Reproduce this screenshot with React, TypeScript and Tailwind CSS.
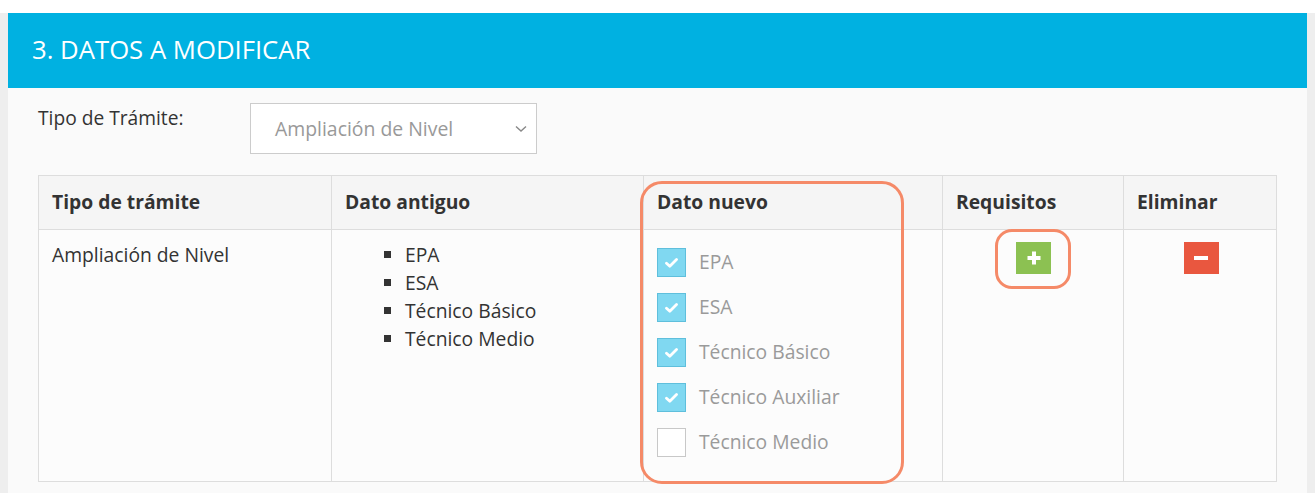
import React from 'react'

const OLD_VALUES = ['EPA', 'ESA', 'Técnico Básico', 'Técnico Medio']

const NEW_VALUES = [
  { label: 'EPA', checked: true },
  { label: 'ESA', checked: true },
  { label: 'Técnico Básico', checked: true },
  { label: 'Técnico Auxiliar', checked: true },
  { label: 'Técnico Medio', checked: false }
]

function CheckBox({ checked }: { checked: boolean }) {
  if (!checked) {
    return <span className="block h-[29px] w-[29px] shrink-0 border border-[#c8c8c8] bg-white" />
  }
  return (
    <span className="flex h-[29px] w-[29px] shrink-0 items-center justify-center border border-[#5fbfdc] bg-[#80d8f1]">
      <svg width="13" height="10" viewBox="0 0 13 10" fill="none">
        <path d="M1.5 5.2 L4.8 8.2 L11.5 1.6" stroke="#fff" strokeWidth="2.8" strokeLinecap="round" strokeLinejoin="round" />
      </svg>
    </span>
  )
}

export default function App() {
  return (
    <div className="flex h-[493px] w-full px-2 pt-[13px] font-['Open_Sans',sans-serif]" style={{ background: 'linear-gradient(#fff 0 13px, #eeeeee 13px)' }}>
      <div className="flex-1 bg-[#fafafa]">
        {/* Panel header */}
        <div className="flex h-[75px] items-center bg-[#00b1e1] px-6">
          <h2 className="text-[25.7px] font-normal text-white">3. DATOS A MODIFICAR</h2>
        </div>

        <div className="px-[30px] pt-[15px]">
          {/* Tipo de trámite select */}
          <div className="flex items-start">
            <label className="w-[212px] pt-[1px] text-[19.2px] text-[#333]">Tipo de Trámite:</label>
            <div className="flex h-[51px] w-[287px] items-center justify-between border border-[#cccccc] bg-white pl-6 pr-[9px]">
              <span className="text-[19.4px] text-[#999]">Ampliación de Nivel</span>
              <svg width="12" height="8" viewBox="0 0 12 8" fill="none">
                <path d="M1 1.5 L6 6 L11 1.5" stroke="#888" strokeWidth="1.4" />
              </svg>
            </div>
          </div>

          {/* Table */}
          <div className="relative mt-[21px]">
            <table className="w-[1239px] border-collapse text-left text-[19.3px] text-[#333]">
              <thead>
                <tr className="h-[54px] bg-[#f5f5f5]">
                  <th className="w-[293px] border border-[#dddddd] px-[13px] align-middle font-bold">Tipo de trámite</th>
                  <th className="w-[312px] border border-[#dddddd] px-[13px] align-middle font-bold">Dato antiguo</th>
                  <th className="w-[299px] border border-[#dddddd] px-[13px] align-middle font-bold">Dato nuevo</th>
                  <th className="w-[181px] border border-[#dddddd] px-[13px] align-middle font-bold">Requisitos</th>
                  <th className="border border-[#dddddd] px-[13px] align-middle font-bold">Eliminar</th>
                </tr>
              </thead>
              <tbody>
                <tr className="h-[252px] bg-[#fcfcfc]">
                  <td className="border border-[#dddddd] px-[13px] pt-[12px] align-top leading-[26px]">Ampliación de Nivel</td>
                  <td className="border border-[#dddddd] px-[13px] pt-[11px] align-top">
                    <ul className="list-[square] pl-[60px] leading-[28px]">
                      {OLD_VALUES.map((v) => (
                        <li key={v}>{v}</li>
                      ))}
                    </ul>
                  </td>
                  <td className="border border-[#dddddd] px-[13px] pt-[18px] align-top">
                    <div className="flex flex-col gap-4">
                      {NEW_VALUES.map((v) => (
                        <div key={v.label} className="flex items-center gap-[13px]">
                          <CheckBox checked={v.checked} />
                          <span className="text-[19.3px] text-[#9a9a9a]">{v.label}</span>
                        </div>
                      ))}
                    </div>
                  </td>
                  <td className="border border-[#dddddd] pt-[12px] align-top">
                    <div className="flex justify-center pl-[1px]">
                      <div className="relative">
                        <button className="flex h-8 w-[35px] items-center justify-center bg-[#8cc152]">
                          <svg width="16" height="16" viewBox="0 0 16 16">
                            <path d="M8 1.5 V14.5 M1.5 8 H14.5" stroke="#fff" strokeWidth="4" />
                          </svg>
                        </button>
                        <span className="pointer-events-none absolute -left-[21px] -top-[13px] h-[60px] w-[76px] rounded-[17px] border-[3px] border-[#f58a68]" />
                      </div>
                    </div>
                  </td>
                  <td className="border border-[#dddddd] pt-[12px] align-top">
                    <div className="flex justify-center pl-[2px]">
                      <button className="flex h-8 w-[35px] items-center justify-center bg-[#e9573f]">
                        <span className="block h-[4px] w-[14px] bg-white" />
                      </button>
                    </div>
                  </td>
                </tr>
              </tbody>
            </table>
            {/* highlight around "Dato nuevo" column */}
            <span className="pointer-events-none absolute left-[602px] top-[6px] h-[303px] w-[264px] rounded-[22px] border-[3px] border-[#f58a68]" />
          </div>
        </div>
      </div>
    </div>
  )
}
